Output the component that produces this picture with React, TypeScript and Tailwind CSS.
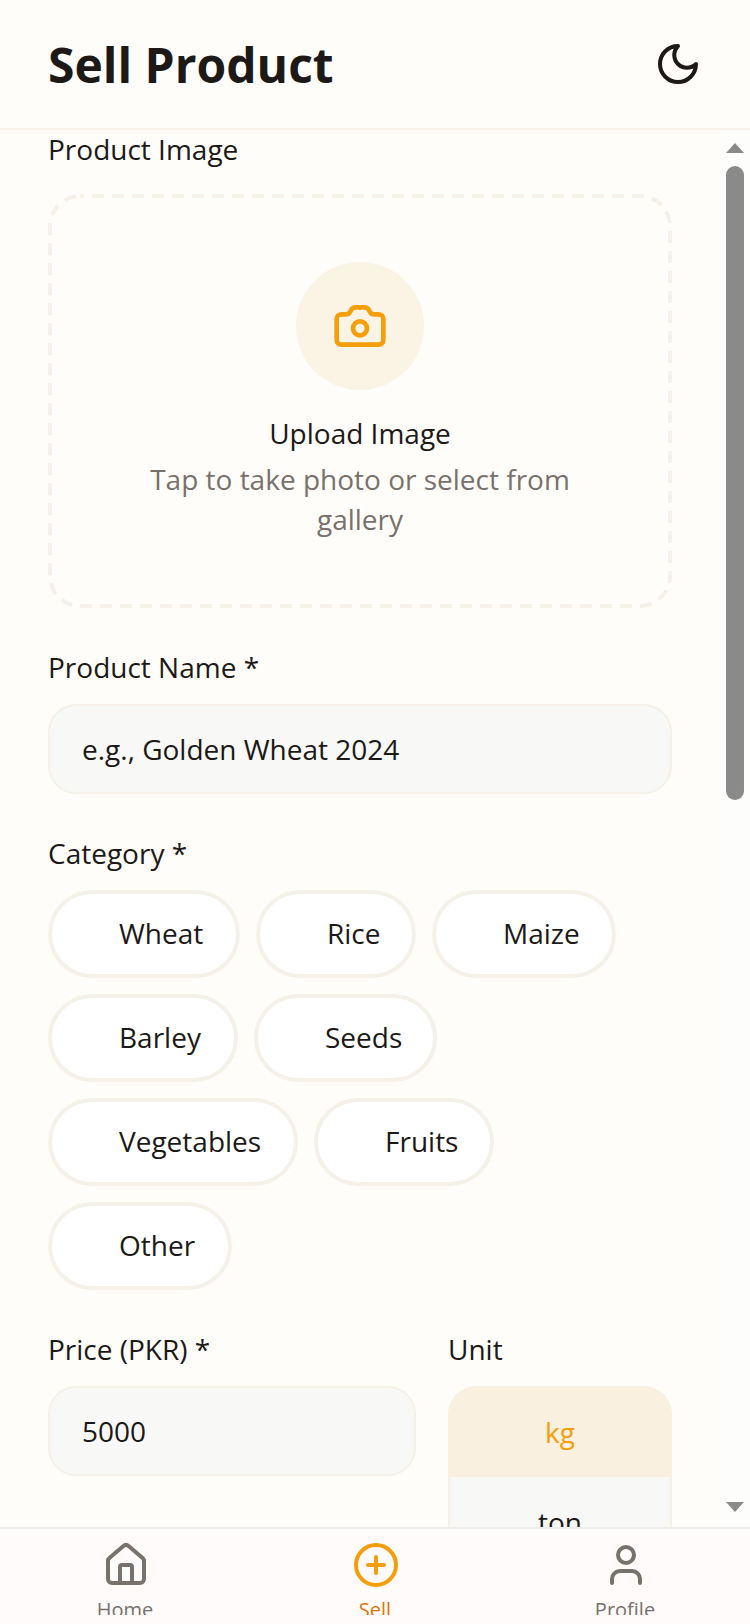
import { Camera, CirclePlus, House, User } from "lucide-react";

const CATEGORIES = [
  [
    { name: "Wheat", width: "w-[192px]" },
    { name: "Rice", width: "w-[160px]" },
    { name: "Maize", width: "w-[184px]" },
  ],
  [
    { name: "Barley", width: "w-[190px]" },
    { name: "Seeds", width: "w-[183px]" },
  ],
  [
    { name: "Vegetables", width: "w-[250px]" },
    { name: "Fruits", width: "w-[180px]" },
  ],
  [{ name: "Other", width: "w-[184px]" }],
];

const NAV = [
  { icon: House, label: "Home", active: false },
  { icon: CirclePlus, label: "Sell", active: true },
  { icon: User, label: "Profile", active: false },
];

function Label({ children }: { children: string }) {
  return <p className="text-[28px] leading-[38px] text-[#1c1917]">{children}</p>;
}

function MoonIcon() {
  return (
    <svg width="48" height="48" viewBox="0 0 24 24" fill="none" stroke="currentColor" strokeWidth="2" strokeLinecap="round" strokeLinejoin="round">
      <path d="M12 3a6 6 0 0 0 9 9 9 9 0 1 1-9-9Z" />
    </svg>
  );
}

export default function App() {
  return (
    <div
      className="flex h-[1624px] w-[750px] flex-col overflow-hidden bg-[#fffdfa] text-[#1c1917]"
      style={{ fontFamily: "'Open Sans', sans-serif" }}
    >
      <header className="flex h-[130px] shrink-0 items-center justify-between border-b-2 border-[#f5f0e8] px-12">
        <h1 className="pt-[2px] text-[48px] font-bold leading-[64px]">Sell Product</h1>
        <MoonIcon />
      </header>

      <div className="relative min-h-0 flex-1 overflow-hidden">
        <main className="w-[720px] px-12">
          <Label>Product Image</Label>
          <div className="relative mt-[26px] flex h-[414px] flex-col items-center justify-center rounded-[32px] px-[64px] pb-0.5">
            {/* dashed outline, the dash rhythm is wider than css border-dashed */}
            <svg className="absolute inset-0" width="624" height="414" fill="none">
              <rect x="2" y="2" width="620" height="410" rx="30" stroke="#f5f0e8" strokeWidth="4" strokeDasharray="12 8" strokeDashoffset="8" />
            </svg>
            <div className="flex h-32 w-32 items-center justify-center rounded-full bg-[#fbf3e4] text-[#f59e0b]">
              <Camera size={56} strokeWidth={2} />
            </div>
            <p className="mt-6 text-[28px] leading-[38px]">Upload Image</p>
            <p className="mt-[7px] text-center text-[28px] leading-[40px] text-[#78716c]">
              Tap to take photo or select from gallery
            </p>
          </div>

          <div className="mt-10">
            <Label>Product Name *</Label>
          </div>
          <div className="mt-[18px] flex h-[90px] items-center rounded-[28px] border-2 border-[#f5f0e8] bg-[#f8f8f6] px-8 text-[28px]">
            e.g., Golden Wheat 2024
          </div>

          <div className="mt-10">
            <Label>Category *</Label>
          </div>
          <div className="mt-[18px] flex flex-col gap-4">
            {CATEGORIES.map((row) => (
              <div key={row[0].name} className="flex gap-4">
                {row.map((cat) => (
                  <div
                    key={cat.name}
                    className={`flex h-[88px] shrink-0 items-center rounded-full border-4 border-[#f5f0e8] bg-white pb-0.5 pl-[67px] text-[28px] ${cat.width}`}
                  >
                    {cat.name}
                  </div>
                ))}
              </div>
            ))}
          </div>

          <div className="mt-10 flex gap-8">
            <div className="w-[368px] shrink-0">
              <Label>Price (PKR) *</Label>
              <div className="mt-[18px] flex h-[90px] items-center rounded-[28px] border-2 border-[#f5f0e8] bg-[#f8f8f6] px-8 text-[28px]">
                5000
              </div>
            </div>
            <div className="w-[224px] shrink-0">
              <Label>Unit</Label>
              <div className="mt-[18px] overflow-hidden rounded-[28px] text-center text-[28px]">
                <div className="flex h-[91px] items-center justify-center bg-[#faf0e0] text-[#f59e0b]">kg</div>
                <div className="flex h-[90px] items-center justify-center border-x-2 border-[#f5f0e8] bg-[#f8f8f6]">ton</div>
              </div>
            </div>
          </div>
        </main>

        {/* scrollbar */}
        <div className="absolute bottom-0 right-0 top-0 w-[30px] bg-[#fdfdfb]">
          <div className="absolute left-[6px] top-[13px] h-0 w-0 border-x-[9px] border-b-[10px] border-x-transparent border-b-[#8a8a8a]" />
          <div className="absolute left-[6px] top-[36px] h-[634px] w-[18px] rounded-full bg-[#8a8a8a]" />
          <div className="absolute bottom-[15px] left-[6px] h-0 w-0 border-x-[9px] border-t-[10px] border-x-transparent border-t-[#8a8a8a]" />
        </div>
      </div>

      <nav className="flex h-[97px] shrink-0 border-t-2 border-[#f0eeec] bg-[#fefbfa] pb-[9px] pl-px">
        {NAV.map(({ icon: Icon, label, active }) => (
          <div key={label} className={`flex w-[250px] shrink-0 flex-col items-center overflow-hidden pt-3 ${active ? "text-[#f59e0b]" : "text-[#78716c]"}`}>
            <Icon className="shrink-0" size={48} strokeWidth={2} />
            <span className={`mt-[7px] -ml-0.5 text-[20px] leading-[28px] ${active ? "text-[#d97706]" : "text-[#78716c]"}`}>{label}</span>
          </div>
        ))}
      </nav>
    </div>
  );
}
